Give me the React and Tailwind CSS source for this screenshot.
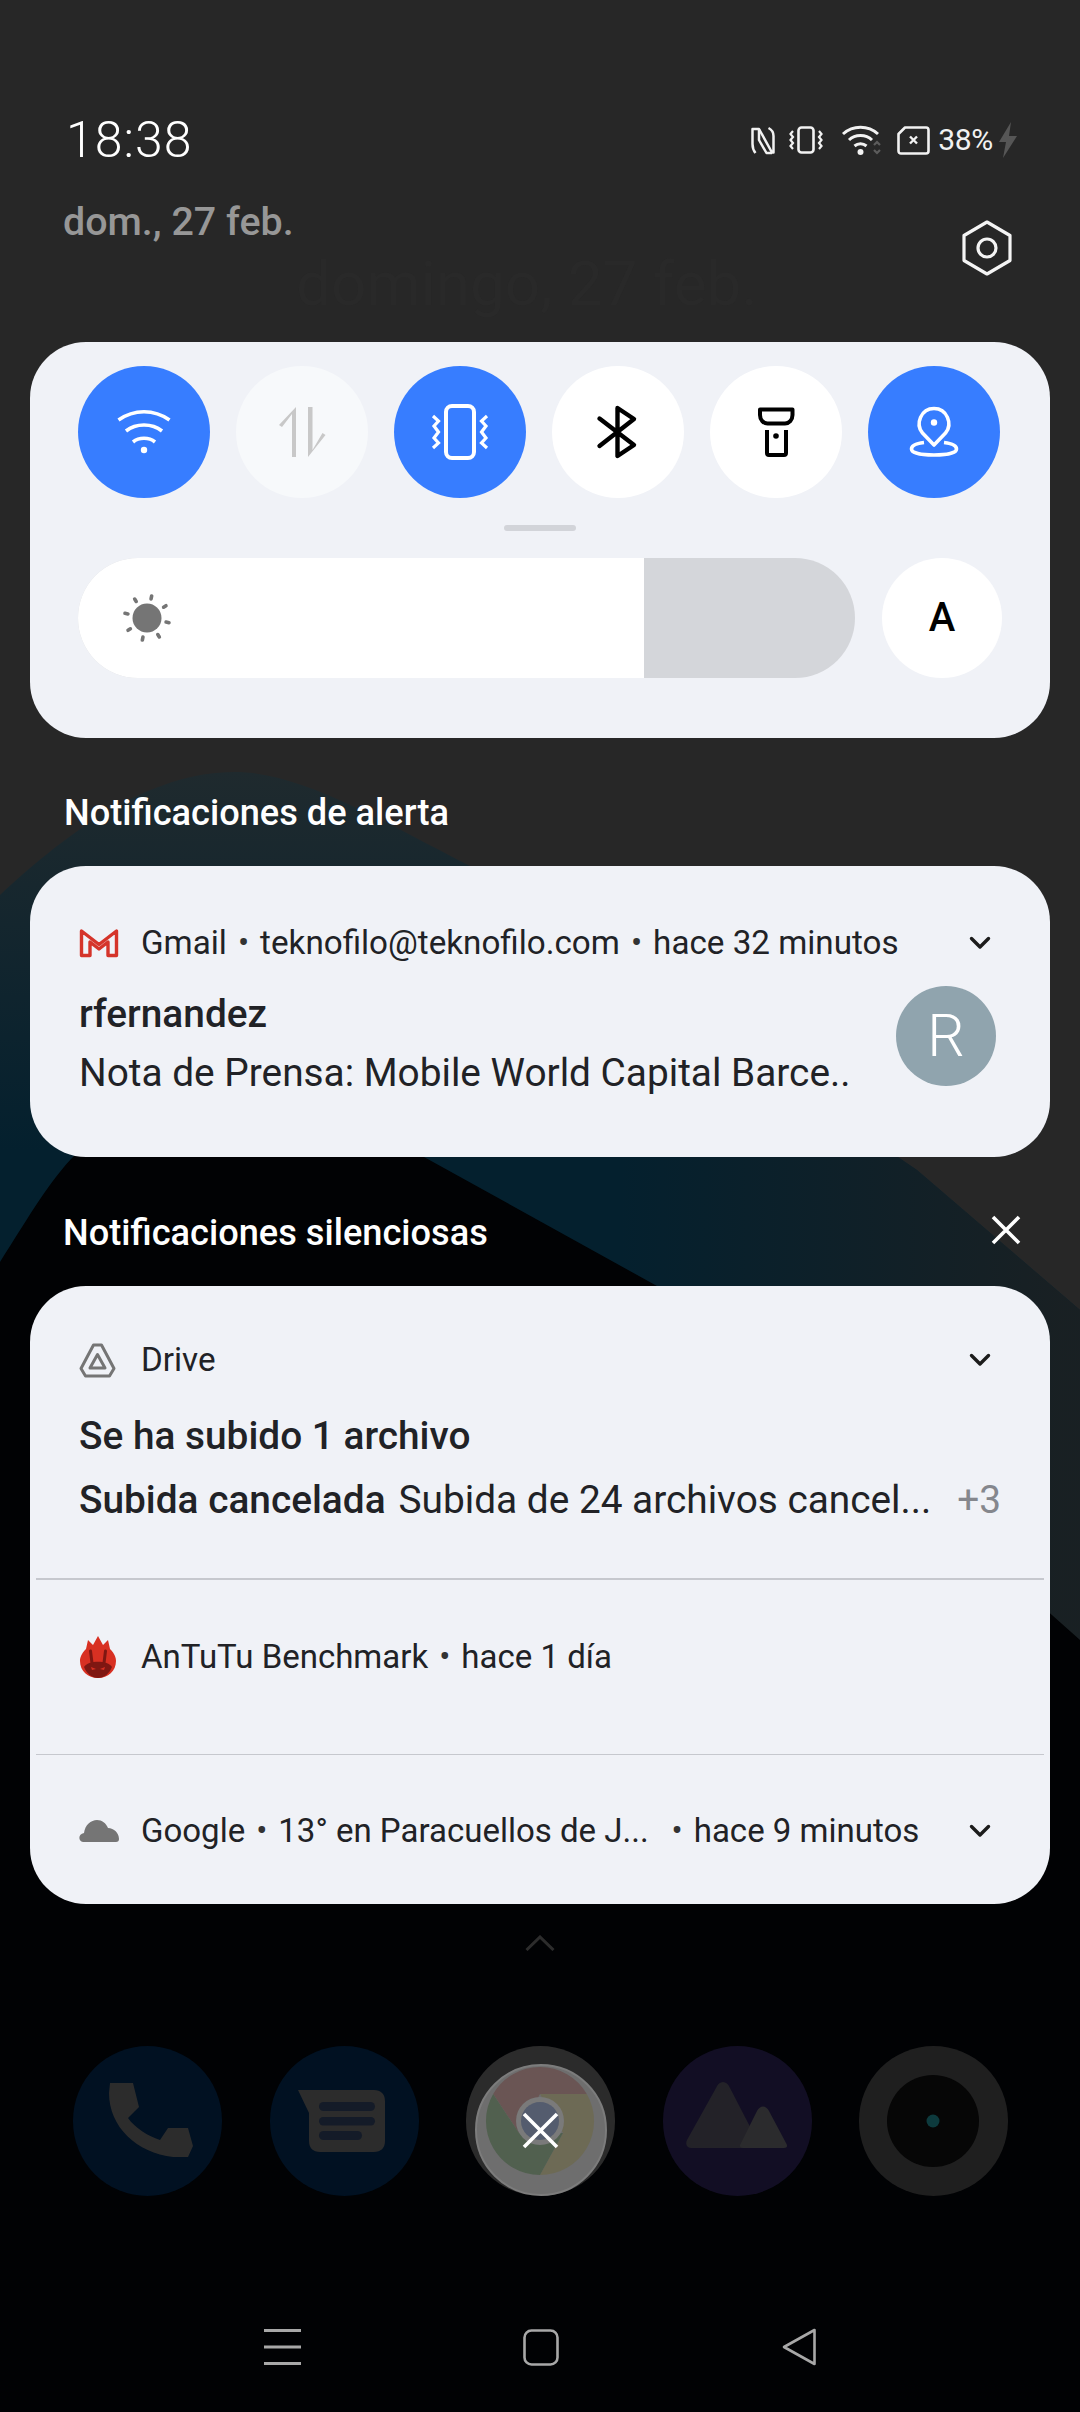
import React from 'react';

// Notification shade, wallpaper is a drawing behind everything
const Wallpaper = () => (
  <svg className="absolute inset-0" width="1080" height="2412" viewBox="0 0 1080 2412">
    <defs>
      <linearGradient id="hump" gradientUnits="userSpaceOnUse" x1="0" y1="772" x2="0" y2="1150">
        <stop offset="0" stopColor="#1f2a2e" />
        <stop offset="1" stopColor="#04202e" />
      </linearGradient>
      <linearGradient id="fade" gradientUnits="userSpaceOnUse" x1="620" y1="0" x2="1060" y2="0">
        <stop offset="0" stopColor="#1b2022" stopOpacity="0" />
        <stop offset="1" stopColor="#1b2022" stopOpacity="0.9" />
      </linearGradient>
    </defs>
    <rect width="1080" height="2412" fill="#272727" />
    <path d="M0 895 C70 830 150 772 235 772 C300 772 380 820 470 866 L917 1170 L1080 1310 V2412 H0 Z" fill="url(#hump)" />
    <path d="M470 866 L917 1170 L1080 1310 V1660 H470 Z" fill="url(#fade)" />
    <path d="M0 1262 C30 1215 50 1180 75 1155 C130 1100 230 1060 300 1085 C350 1105 395 1135 424 1157 L657 1286 L900 1480 L1080 1640 V2412 H0 Z" fill="#010204" />
  </svg>
);

const Chevron = () => (
  <svg width="22" height="14" viewBox="0 0 22 14" fill="none" stroke="#1c1c1c" strokeWidth="3.4" strokeLinecap="round" strokeLinejoin="round">
    <path d="M2.5 2.5 L11 11 L19.5 2.5" />
  </svg>
);

const Dot = ({ className = 'mx-[11px]' }) => <span className={`text-[#333] ${className}`}>•</span>;

const StatusIcons = () => (
  <div className="flex items-center h-[56px] text-[#f2f2f2]">
    <svg width="24" height="29" viewBox="0 0 24 29" fill="none" stroke="#f2f2f2" strokeWidth="2.5" strokeLinejoin="round">
      <path d="M4.5 27 C2 24 1.5 21.5 1.5 18 V3 H8 L21 26.5 H22.5 V10 C22.5 6 20.5 3.5 17.5 2" />
      <path d="M8 3 V14 L15.5 27 H21" />
    </svg>
    <svg className="ml-[14px]" width="34" height="28" viewBox="0 0 34 28" fill="none" stroke="#f2f2f2" strokeWidth="2.6">
      <rect x="9.5" y="1.5" width="15" height="25" rx="3" />
      <path d="M4 5 L1.5 8 L4 11 L1.5 14 L4 17 L1.5 20 L4 23 M30 5 L32.5 8 L30 11 L32.5 14 L30 17 L32.5 20 L30 23" strokeWidth="2.2" />
    </svg>
    <svg className="ml-[18px]" width="42" height="32" viewBox="0 0 42 32" fill="none" stroke="#f2f2f2" strokeWidth="3">
      <path d="M2 10 C12 1 27 1 37 10 M8 16 C14 10 25 10 31 16 M13.5 22 C17 19 22 19 25.5 22" />
      <circle cx="19.5" cy="28" r="3" fill="#f2f2f2" stroke="none" />
      <path d="M33 21 L36 18 L39 21 M33 26 L36 29 L39 26" stroke="#5c5c5c" strokeWidth="2.2" />
    </svg>
    <svg className="ml-[14px]" width="33" height="29" viewBox="0 0 33 29" fill="none" stroke="#f2f2f2" strokeWidth="2.6">
      <path d="M8 1.5 H29 C30.5 1.5 31.5 2.5 31.5 4 V25 C31.5 26.5 30.5 27.5 29 27.5 H4 C2.5 27.5 1.5 26.5 1.5 25 V8 Z" strokeLinejoin="round" />
      <path d="M13 10.5 L20 17.5 M20 10.5 L13 17.5" strokeWidth="2.4" />
    </svg>
    <span className="ml-[8px] text-[30px] leading-[30px] tracking-[-0.3px]">38%</span>
    <svg className="ml-[5px]" width="20" height="36" viewBox="0 0 20 36">
      <path d="M13 0 L1 20 H8 L5 36 L19 14 H11 Z" fill="#565656" />
    </svg>
  </div>
);

const Gear = () => (
  <svg width="52" height="56" viewBox="0 0 52 56" fill="none" stroke="#f4f4f4" strokeWidth="3.2">
    <path d="M26 2 L49 15.5 V40.5 L26 54 L3 40.5 V15.5 Z" strokeLinejoin="round" />
    <circle cx="26" cy="28" r="9" />
  </svg>
);

// toggle icons share the 132 box of their circle
const WifiGlyph = () => (
  <g fill="none" stroke="#fff" strokeWidth="3.6">
    <path d="M40.5 54 C56 43 76 43 91.5 54" />
    <path d="M48 65 C58 57 74 57 84 65" />
    <path d="M55 76 C61 71 71 71 77 76" />
    <circle cx="66" cy="84" r="3.2" fill="#fff" stroke="none" />
  </g>
);

const DataGlyph = () => (
  <path d="M56 91 V48 L46 61 L43 59 L60 41 V91 Z M72 41 H76.5 V84 L86.5 67 L89.5 69 L72 91 Z" fill="#c8c8c8" />
);

const VibrateGlyph = () => (
  <g fill="none" stroke="#fff" strokeWidth="4">
    <rect x="52" y="40" width="28" height="52" rx="6" />
    <path d="M39 50 L44.5 55 L40 60 L44.5 66 L40 72 L44.5 77 L39 82 M93 50 L87.5 55 L92 60 L87.5 66 L92 72 L87.5 77 L93 82" strokeWidth="3.2" />
  </g>
);

const BluetoothGlyph = () => (
  <path d="M47.5 52.5 L82 79 L65.5 90 V42 L82 53 L47.5 80" fill="none" stroke="#000" strokeWidth="4.4" strokeLinecap="round" strokeLinejoin="round" />
);

const TorchGlyph = () => (
  <g fill="none" stroke="#000" strokeWidth="4">
    <path d="M50 43.5 H82.5 V49 C82.5 54 79 57.5 75 57.5 H57.5 C53.5 57.5 50 54 50 49 Z" strokeLinejoin="round" />
    <path d="M57 64 V87 C57 88.2 57.8 89 59 89 H74 C75.2 89 76 88.2 76 87 V64" />
    <circle cx="66" cy="70" r="2.8" fill="#000" stroke="none" />
  </g>
);

const LocationGlyph = () => (
  <g fill="none" stroke="#fff" strokeWidth="3.6">
    <path d="M66 79 L54.5 67 C47 58 53 42.5 66 42.5 C79 42.5 85 58 77.5 67 Z" strokeLinejoin="round" />
    <circle cx="66" cy="56.5" r="3.2" fill="#fff" stroke="none" />
    <path d="M56 76.5 C47.5 77.5 43.5 80 43.5 83 C43.5 87 53 89 66 89 C79 89 88.5 87 88.5 83 C88.5 80 84.5 77.5 76 76.5" />
  </g>
);

const toggles = [
  { bg: 'bg-[#377dff]', glyph: <WifiGlyph /> },
  { bg: 'bg-[#f7f9fb]', glyph: <DataGlyph /> },
  { bg: 'bg-[#377dff]', glyph: <VibrateGlyph /> },
  { bg: 'bg-white', glyph: <BluetoothGlyph /> },
  { bg: 'bg-white', glyph: <TorchGlyph /> },
  { bg: 'bg-[#377dff]', glyph: <LocationGlyph /> },
];

const SunIcon = () => (
  <svg width="50" height="50" viewBox="0 0 50 50" fill="#757575">
    <circle cx="25" cy="25" r="14.5" />
    <g stroke="#757575" strokeWidth="3.6" strokeLinecap="round" transform="rotate(12 25 25)">
      <path d="M25 2.5 V5.5 M25 44.5 V47.5 M2.5 25 H5.5 M44.5 25 H47.5 M9 9 L11 11 M39 39 L41 41 M9 41 L11 39 M39 11 L41 9" />
    </g>
  </svg>
);

const GmailIcon = () => (
  <svg width="40" height="30" viewBox="0 0 40 30" fill="none" stroke="#d5342a" strokeWidth="3.4" strokeLinejoin="round">
    <path d="M2.5 27.5 V3 L20 16.5 L37.5 3 V27.5 H29 V14 L20 21 L11 14 V27.5 Z" />
  </svg>
);

const DriveIcon = () => (
  <svg width="37" height="35" viewBox="0 0 37 35" fill="none" stroke="#757575" strokeWidth="3" strokeLinejoin="round">
    <path d="M14.5 2 H22.5 L35 25.5 L30.5 33 H6.5 L2 25.5 Z" />
    <path d="M18.5 11.5 L26 25 H11 Z" />
  </svg>
);

const AntutuIcon = () => (
  <svg width="38" height="42" viewBox="0 0 38 42">
    <path d="M19 0 L24 9 L29 4 L31 13 C36 18 37 22 37 25 C37 35 29 42 19 42 C9 42 1 35 1 25 C1 22 2 18 7 13 L9 4 L14 9 Z" fill="#d83022" />
    <path d="M5 31 C9 24 29 24 33 31 C30 38 25 42 19 42 C13 42 8 38 5 31 Z" fill="#7f1712" />
    <path d="M13 27 L11.5 15 M25 27 L26.5 15" stroke="#7f1712" strokeWidth="3" strokeLinecap="round" />
    <path d="M12 31 L17 33 L13 34 Z M26 31 L21 33 L25 34 Z" fill="#d83022" />
  </svg>
);

const CloudIcon = () => (
  <svg width="40" height="22" viewBox="0 0 40 22">
    <path d="M4 22 C-1 21 -1 14 5 13 C6 5 12 0 18 0 C23 0 27 3 29 8 C35 8 40 13 40 19 C40 21 39 22 37 22 Z" fill="#757575" />
  </svg>
);

const DockCircle = ({ bg, children }) => (
  <div className={`relative h-[150px] w-[149px] rounded-full ${bg}`}>
    <svg className="absolute inset-0" width="149" height="150" viewBox="0 0 149 150">
      {children}
    </svg>
  </div>
);

const App = () => (
  <div className="relative h-[2412px] w-[1080px] overflow-hidden font-[Roboto,sans-serif] text-[#212226]">
    <Wallpaper />

    <div className="relative flex flex-col">
      {/* header */}
      <div className="relative h-[342px]">
        <div className="flex items-start justify-between pl-[66px] pr-[62px] pt-[112px]">
          <span className="text-[50px] font-[350] leading-[56px] text-white tracking-[1px]">18:38</span>
          <StatusIcons />
        </div>
        <div className="mt-[29px] flex items-start justify-between pl-[63px] pr-[67px]">
          <span className="text-[39.4px] font-medium leading-[50px] text-[#979797]">dom., 27 feb.</span>
          <div className="mt-[23px]">
            <Gear />
          </div>
        </div>
        <span className="absolute left-[296px] top-[254px] text-[62px] leading-[60px] text-[#292929]">domingo, 27 feb.</span>
      </div>

      {/* quick settings */}
      <div className="mx-[30px] h-[396px] rounded-[56px] bg-[#f0f2f7] px-[48px] pt-[24px]">
        <div className="flex gap-[26px]">
          {toggles.map((t, i) => (
            <div key={i} className={`h-[132px] w-[132px] rounded-full ${t.bg}`}>
              <svg width="132" height="132" viewBox="0 0 132 132">{t.glyph}</svg>
            </div>
          ))}
        </div>
        <div className="mx-auto mt-[27px] h-[6px] w-[72px] rounded-full bg-[#d2d4d9]" />
        <div className="mt-[27px] flex">
          <div className="h-[120px] w-[777px] overflow-hidden rounded-full bg-[#d4d6da]">
            <div className="flex h-full w-[566px] items-center bg-white pl-[44px]">
              <SunIcon />
            </div>
          </div>
          <div className="ml-[27px] flex h-[120px] w-[120px] items-center justify-center rounded-full bg-white text-[40px] font-medium text-black">
            A
          </div>
        </div>
      </div>

      {/* alert section */}
      <div className="h-[128px] pl-[64px] pt-[53px] text-[36.2px] font-medium leading-[44px] text-white">
        Notificaciones de alerta
      </div>
      <div className="mx-[30px] h-[291px] rounded-[56px] bg-[#f0f2f7] pl-[49px] pr-[54px] pt-[57px]">
        <div className="flex h-[40px] items-center text-[33.2px]">
          <GmailIcon />
          <span className="ml-[22px]">Gmail</span>
          <Dot />
          <span>teknofilo@teknofilo.com</span>
          <Dot />
          <span>hace 32 minutos</span>
          <span className="ml-auto mr-[5px]">
            <Chevron />
          </span>
        </div>
        <div className="relative mt-[29px]">
          <div className="text-[38.8px] font-medium leading-[44px]">rfernandez</div>
          <div className="mt-[15px] text-[38.8px] leading-[44px]">Nota de Prensa: Mobile World Capital Barce..</div>
          <div className="absolute -top-[6px] right-[0px] flex h-[100px] w-[100px] items-center justify-center rounded-full bg-[#90a4ae] text-[59px] font-[350] text-white">
            R
          </div>
        </div>
      </div>

      {/* silent section */}
      <div className="flex h-[129px] items-start justify-between pl-[63px] pr-[30px] pt-[54px] text-[36.2px] font-medium leading-[44px] text-white">
        <span>Notificaciones silenciosas</span>
        <svg className="mr-[29px] mt-[4px]" width="30" height="30" viewBox="0 0 30 30" stroke="#fff" strokeWidth="3.6">
          <path d="M2 2 L28 28 M28 2 L2 28" />
        </svg>
      </div>
      <div className="mx-[30px] flex h-[618px] flex-col rounded-[56px] bg-[#f0f2f7]">
        <div className="h-[292px] pl-[49px] pr-[54px] pt-[54px]">
          <div className="flex h-[40px] items-center text-[33.2px]">
            <DriveIcon />
            <span className="ml-[25px]">Drive</span>
            <span className="ml-auto mr-[5px]">
              <Chevron />
            </span>
          </div>
          <div className="mt-[34px] text-[38.8px] font-medium leading-[44px]">Se ha subido 1 archivo</div>
          <div className="mt-[20px] flex items-center text-[38.8px] leading-[44px]">
            <span className="font-medium">Subida cancelada</span>
            <span className="ml-[13px]">Subida de 24 archivos cancel...</span>
            <span className="ml-auto -mr-[5px] text-[#85878d]">+3</span>
          </div>
        </div>
        <div className="mx-[6px] h-[1.5px] bg-[#c6c8ce]" />
        <div className="h-[174px] pl-[49px] pt-[57px]">
          <div className="flex h-[40px] items-center text-[33px]">
            <AntutuIcon />
            <span className="ml-[24px]">AnTuTu Benchmark</span>
            <Dot />
            <span>hace 1 día</span>
          </div>
        </div>
        <div className="mx-[6px] h-[1.5px] bg-[#c6c8ce]" />
        <div className="pl-[49px] pr-[54px] pt-[56px]">
          <div className="flex h-[40px] items-center text-[33px]">
            <CloudIcon />
            <span className="ml-[22px]">Google</span>
            <Dot />
            <span>13° en Paracuellos de J...</span>
            <Dot className="ml-[23px] mr-[11px]" />
            <span>hace 9 minutos</span>
            <span className="ml-auto mr-[5px]">
              <Chevron />
            </span>
          </div>
        </div>
      </div>

      {/* home screen dimmed below */}
      <svg className="mx-auto mt-[31px]" width="30" height="16" viewBox="0 0 30 16" fill="none" stroke="#2c2c2c" strokeWidth="3">
        <path d="M1.5 15 L15 2 L28.5 15" />
      </svg>
      <div className="mt-[95px] flex gap-[47.5px] pl-[73px]">
        <DockCircle bg="bg-[#011122]">
          <path d="M37 37 H60 L66 61 L55 72 C62 82 75 90 87 94 L95 82 H115 L120 100 L115 111 H100 C64 107 36 81 36 47 Z" fill="#2c2c2c" />
        </DockCircle>
        <DockCircle bg="bg-[#011122]">
          <path d="M28 44 H104 C111 44 115 48 115 55 V95 C115 102 111 106 104 106 H50 C43 106 39 102 39 95 V67 Z" fill="#2c2c2c" />
          <rect x="49" y="56" width="56" height="9" rx="4.5" fill="#141b28" />
          <rect x="49" y="71" width="56" height="8.5" rx="4.2" fill="#141b28" />
          <rect x="49" y="85" width="43" height="9" rx="4.5" fill="#141b28" />
        </DockCircle>
        <div className="relative h-[150px] w-[149px] rounded-full bg-[#2b2b2b]">
          <div className="absolute bottom-0 left-[9px] h-[132px] w-[132px] rounded-full border-2 border-[#7c7c7c] bg-[#6e6e6e]" />
          <svg className="absolute inset-0" width="149" height="150" viewBox="0 0 149 150">
            <path d="M27.2 48 A54 54 0 0 1 120.8 48 H74 L53 87 Z" fill="#6a5554" />
            <path d="M120.8 48 A54 54 0 0 1 74 129 L97 87 L74 48 Z" fill="#6d6a55" />
            <path d="M74 129 A54 54 0 0 1 27.2 48 L53 87 H97 Z" fill="#51604f" />
            <circle cx="74" cy="75" r="24" fill="#7a7a7a" />
            <circle cx="74" cy="75" r="19" fill="#545c6e" />
            <path d="M58 68 L91 101 M91 68 L58 101" stroke="#fff" strokeWidth="3.6" />
          </svg>
        </div>
        <DockCircle bg="bg-[#120e24]">
          <path d="M53 42 C56 34 64 34 67 42 L98 102 H28 C24 102 22 98 24 94 Z" fill="#232228" />
          <path d="M94 65 C97 59 103 59 106 65 L123 97 C125 100 124 102 121 102 H80 C77 102 76 100 78 97 Z" fill="#2b2b2d" />
        </DockCircle>
        <DockCircle bg="bg-[#1f1f1f]">
          <circle cx="74" cy="75" r="46" fill="#060606" />
          <circle cx="74" cy="75" r="6.5" fill="#0d3a3d" />
        </DockCircle>
      </div>

      {/* nav bar */}
      <div className="mt-[132px] flex items-center pl-[264px]">
        <svg width="37" height="36" viewBox="0 0 37 36" fill="#a8a8a8">
          <rect width="37" height="3" />
          <rect y="16.5" width="37" height="3" />
          <rect y="33" width="37" height="3" />
        </svg>
        <svg className="ml-[222px]" width="36" height="37" viewBox="0 0 36 37" fill="none" stroke="#a8a8a8" strokeWidth="2.6">
          <rect x="1.5" y="1.5" width="33" height="34" rx="7" />
        </svg>
        <svg className="ml-[223px]" width="36" height="38" viewBox="0 0 36 38" fill="none" stroke="#a8a8a8" strokeWidth="2.6" strokeLinejoin="round">
          <path d="M32.5 2 V36 L2 19 Z" />
        </svg>
      </div>
    </div>
  </div>
);

export default App;
